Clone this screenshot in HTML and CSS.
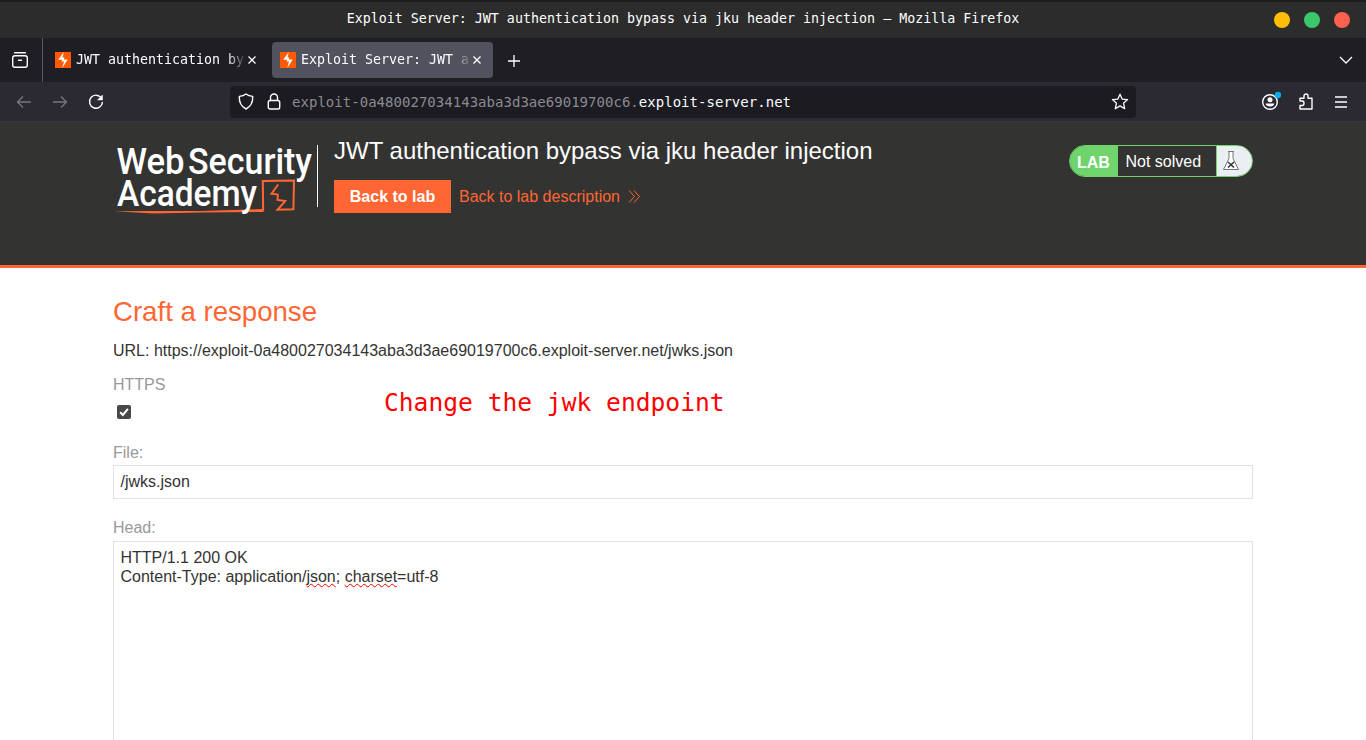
FILE: index.html
```html
<!DOCTYPE html>
<html lang="en">
<head>
<meta charset="utf-8">
<title>Exploit Server</title>
<link rel="stylesheet" href="styles.css">
</head>
<body>
<svg width="0" height="0" class="defs">
  <symbol id="burp" viewBox="0 0 16 16"><rect width="16" height="16" fill="#ff5a00"/><path d="M8.800 0 3.200 7.800h4L6.500 9.500H9L7.200 16 12.800 7.400H9L9.300 5.500H7.500Z" fill="#fff"/></symbol>
  <symbol id="close" viewBox="0 0 10 10"><path d="m1.500 1.500 7 7m0-7-7 7" stroke="#fff" stroke-width="1.300"/></symbol>
</svg>
<header class="titlebar">
  <div class="window-title">Exploit Server: JWT authentication bypass via jku header injection – Mozilla Firefox</div>
  <div class="window-buttons"><i class="minimize"></i><i class="maximize"></i><i class="quit"></i></div>
</header>
<nav class="tabs">
  <div class="history"><svg width="18" height="18" viewBox="0 0 18 18" fill="none" stroke="#fbfbfe" stroke-width="1.400" stroke-linecap="round"><path d="M3.500 1.800h11"/><rect x="1.700" y="4.700" width="14.600" height="11.600" rx="2.200"/><path d="M7.500 9.200h3"/></svg></div>
  <div class="tab"><svg width="16" height="16"><use href="#burp"/></svg><span class="tab-label">JWT authentication by</span><svg width="10" height="10"><use href="#close"/></svg></div>
  <div class="tab active"><svg width="16" height="16"><use href="#burp"/></svg><span class="tab-label">Exploit Server: JWT a</span><svg width="10" height="10"><use href="#close"/></svg></div>
  <svg class="new-tab" width="12" height="12" viewBox="0 0 12 12" stroke="#fff" stroke-width="1.300"><path d="M6 0v12M0 6h12"/></svg>
  <svg class="all-tabs" width="14" height="8" viewBox="0 0 14 8" fill="none" stroke="#fff" stroke-width="1.300"><path d="m1 1 6 6 6-6"/></svg>
</nav>
<div class="toolbar">
  <div class="nav-icons">
    <svg width="16" height="16" viewBox="0 0 16 16" fill="none" stroke="#77767e" stroke-width="1.300"><path d="M15 8H1.500M7 2.500 1.500 8 7 13.500"/></svg>
    <svg width="16" height="16" viewBox="0 0 16 16" fill="none" stroke="#77767e" stroke-width="1.300"><path d="M1 8h13.500M9 2.500 14.500 8 9 13.500"/></svg>
    <svg width="16" height="16" viewBox="0 0 16 16" fill="none" stroke="#fff" stroke-width="1.400"><path d="M13.500 4.200A6.500 6.500 0 1 0 14.500 8"/><path d="M14.500 1v5h-5Z" fill="#fff" stroke-width=".5"/></svg>
  </div>
  <div class="address">
    <svg width="16" height="17" viewBox="0 0 16 17" fill="none" stroke="#fff" stroke-width="1.400" stroke-linejoin="round"><path d="M8 1c2 1.600 4 2.200 6.700 2.400.3 5.900-1.500 10-6.700 12.600C2.800 13.400 1 9.300 1.300 3.400 4 3.200 6 2.600 8 1Z"/></svg>
    <svg class="lock" width="14" height="17" viewBox="0 0 14 17" fill="none" stroke="#fff" stroke-width="1.400"><rect x="1.300" y="7.500" width="11.400" height="8.500" rx="1.800"/><path d="M3.500 7.500v-3a3.500 3.500 0 0 1 7 0v3"/></svg>
    <span class="url">exploit-0a480027034143aba3d3ae69019700c6.<b>exploit-server.net</b></span>
    <svg class="star" width="18" height="17" viewBox="0 0 18 17" fill="none" stroke="#fff" stroke-width="1.300" stroke-linejoin="round"><path d="m9 1.200 2.100 4.900 5.500.5-4.100 3.600 1.200 5.500L9 12.900l-4.700 2.800 1.200-5.500-4.100-3.600 5.500-.5Z"/></svg>
  </div>
  <div class="actions">
    <svg width="20" height="20" viewBox="0 0 20 20"><circle cx="9" cy="11" r="7.300" fill="none" stroke="#fff" stroke-width="1.400"/><circle cx="9" cy="8.800" r="2.500" fill="#fff"/><path d="M4.700 12.500h8.600c0 4-8.600 4-8.600 0Z" fill="#fff"/><circle cx="17" cy="4" r="3.200" fill="#00aef0"/></svg>
    <svg class="puzzle" width="14" height="17" viewBox="0 0 14 17" fill="none" stroke="#fff" stroke-width="1.400" stroke-linejoin="round"><path d="M1 8V5.200h4V3c0-2.700 4-2.700 4 0v2.200h4V16H1v-3.500h2.200c2.400 0 2.400-4.500 0-4.500Z"/></svg>
    <svg width="12" height="12" viewBox="0 0 12 12" stroke="#fff" stroke-width="1.300"><path d="M0 1h12M0 6h12M0 11h12"/></svg>
  </div>
</div>
<section class="lab-header">
  <svg class="logo" width="204" height="74" viewBox="113 142 204 74">
    <path d="M114 211.300 150 210.900l50 .2 63-2.100v3l-60 .6-50 .9Z" fill="#ff6633"/>
    <path d="M263.200 211.500 262.800 181l31.200-.5-.6 28.800-15.900.5 7.700-8.700-7.700-1.100.3-5.400-6.300-.9 6.700-9.200" fill="none" stroke="#ff6633" stroke-width="2"/>
    <text x="116.500" y="173.500" textLength="68" lengthAdjust="spacingAndGlyphs">Web</text>
    <text x="188" y="173.500" textLength="124" lengthAdjust="spacingAndGlyphs">Security</text>
    <text x="117" y="206" textLength="140" lengthAdjust="spacingAndGlyphs">Academy</text>
  </svg>
  <div class="divider"></div>
  <div class="lab-title">
    <h1>JWT authentication bypass via jku header injection</h1>
    <div class="links"><a class="button">Back to lab</a><a class="description">Back to lab description</a><svg width="13" height="13" viewBox="0 0 13 13" fill="none" stroke="#ff6633"><path d="m1 .5 5.500 6-5.500 6m5-12 5.500 6-5.500 6"/></svg></div>
  </div>
  <div class="status"><strong>LAB</strong><span>Not solved</span><div class="flask"><svg width="18" height="22" viewBox="0 0 18 22" fill="#fff" stroke="#777"><path d="M6 1.500h6M7 1.500v7L1.500 19.500h15L11 8.500v-7"/><path d="m6 12 6 5.500m0-5.500-6 5.500" stroke="#333" stroke-width="1.500"/></svg></div></div>
</section>
<main class="form">
  <h2>Craft a response</h2>
  <p class="response-url">URL: https://exploit-0a480027034143aba3d3ae69019700c6.exploit-server.net/jwks.json</p>
  <div class="https-row">
    <div class="https"><label>HTTPS</label><div class="checkbox"><svg width="14" height="14" viewBox="0 0 14 14"><path d="m3.200 7.200 2.700 2.700 5-6" fill="none" stroke="#fff" stroke-width="2"/></svg></div></div>
    <div class="note">Change the jwk endpoint</div>
  </div>
  <label class="file-label">File:</label>
  <div class="field">/jwks.json</div>
  <label class="head-label">Head:</label>
  <div class="field head">HTTP/1.1 200 OK<br>Content-Type: application/<u>json</u>; <u>charset</u>=utf-8</div>
</main>
</body>
</html>
```
FILE: styles.css
```css
* { box-sizing: border-box; }
body { margin: 0; height: 740px; overflow: hidden; background: #fff; color: #333332; font: 16px/19px "Liberation Sans", Arial, sans-serif; }
svg { display: block; flex: none; }
.defs { position: absolute; }
.titlebar { height: 38px; border-top: 2px solid #1d1d1d; background: #2c2c2c; display: grid; grid-template-columns: 1fr auto 1fr; }
.window-title { grid-column: 2; color: #fff; font: 13.300px/33px "DejaVu Sans Mono", monospace; white-space: pre; }
.window-buttons { display: flex; gap: 14px; justify-content: flex-end; align-items: center; padding-right: 16px; }
.window-buttons i { width: 16px; height: 16px; border-radius: 50%; }
.minimize { background: #ffbd08; }
.maximize { background: #3bc86a; }
.quit { background: #ff6050; }
.tabs { height: 44px; background: #1f1e25; display: flex; align-items: center; }
.history { width: 43px; height: 44px; padding: 13px 0 0 11px; border-right: 1px solid #5b5a62; }
.tab { width: 221px; height: 36px; margin-left: 4px; padding: 0 11px 0 8px; display: flex; align-items: center; border-radius: 4px; }
.tab:not(.active) { padding-right: 11px; }
.active { background: #52525e; }
.tab-label { flex: 1; min-width: 0; margin-left: 5px; overflow: hidden; white-space: nowrap; color: #fbfbfe; font: 13.300px/20px "DejaVu Sans Mono", monospace; mask-image: linear-gradient(to left, transparent, #000 20px); }
.new-tab { margin: 2px 0 0 15px; }
.all-tabs { margin: 0 13px 0 auto; }
.toolbar { height: 40px; background: #2b2a33; border-bottom: 1px solid #38353a; display: flex; align-items: center; }
.nav-icons { width: 230px; padding-left: 16px; display: flex; gap: 20px; }
.address { width: 906px; height: 32px; padding: 0 7px 0 8px; border-radius: 4px; background: #1c1b22; display: flex; align-items: center; }
.lock { margin-left: 13px; }
.url { margin-left: 11px; color: #8b8a91; font: 14px/20px "DejaVu Sans Mono", monospace; letter-spacing: .030px; }
.url b { color: #fbfbfe; font-weight: 400; }
.star { margin-left: auto; }
.actions { margin-left: 125px; display: flex; align-items: center; gap: 18px; }
.actions svg:first-child { margin-top: -2px; }
.actions svg:last-child { margin-left: 4px; }
.lab-header { height: 146px; background: #333332; border-bottom: 3px solid #ff6633; padding: 0 113px; display: flex; align-items: flex-start; }
.logo { margin-top: 20px; overflow: visible; }
.logo text { fill: #fff; font: 500 37px Roboto, sans-serif; }
.divider { width: 1px; height: 62px; margin-top: 23px; background: #fff; }
.lab-title { margin: 13px 0 0 16px; }
h1 { margin: 0; color: #fff; font-size: 24px; font-weight: 400; line-height: 31px; white-space: nowrap; }
.links { margin-top: 14px; display: flex; align-items: center; color: #ff6633; }
.button { width: 117px; height: 33px; background: #ff6633; color: #fff; font-weight: 700; line-height: 33px; text-align: center; }
.description { margin: 0 8px; }
.status { width: 184px; height: 32px; margin: 23px 0 0 auto; border: 1px solid #70d46d; border-radius: 16px; overflow: hidden; display: flex; color: #fff; line-height: 31px; }
.status strong { width: 48px; padding-left: 7px; background: #70d46d; line-height: 33px; }
.status span { width: 98px; padding-left: 7.500px; }
.flask { flex: 1; padding: 4px 0 0 5px; border-left: 1px solid #70d46d; background: #eaeff3; }
.form { padding: 28px 113px 0; }
h2 { margin: 0; color: #ff6633; font-size: 27.600px; font-weight: 400; line-height: 32px; }
.response-url { margin: 13px 0 15px; }
label { display: block; color: #999; }
.https-row { height: 68px; display: flex; }
.https { width: 271px; }
.checkbox { width: 14px; height: 14px; margin: 11px 0 0 4px; border-radius: 2px; background: #48484b; }
.note { padding-top: 14px; color: #f00; font: 24.600px/28px "DejaVu Sans Mono", monospace; }
.field { height: 34px; margin-top: 3px; padding: 6px 6.500px; border: 1px solid #e0e0e0; line-height: 20px; }
.head-label { margin-top: 19px; }
.head { height: 220px; margin-top: 4px; line-height: 19px; }
.head u { text-decoration: underline wavy #f00 1px; text-underline-offset: 1px; text-decoration-skip-ink: none; }
```
